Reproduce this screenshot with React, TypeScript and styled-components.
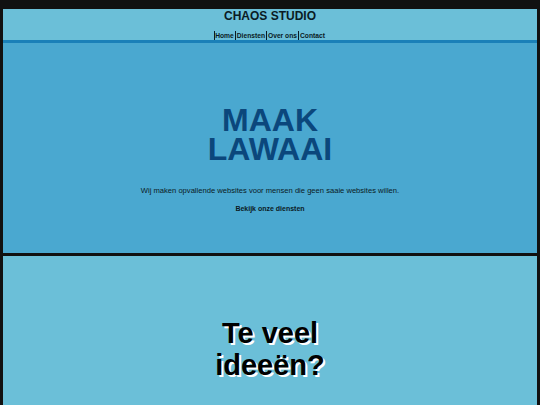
import React from "react";
import styled, { createGlobalStyle } from "styled-components";

const Global = createGlobalStyle`
  html, body { margin: 0; padding: 0; background: #111111; }
  body { font-family: "Liberation Sans", Arial, sans-serif; }
  #root { padding: 9px 3px 0; }
`;

const Page = styled.div`
  display: flex;
  flex-direction: column;
`;

const Header = styled.header`
  background: #6bbfd8;
  border-bottom: 3px solid #1a80b8;
  display: flex;
  flex-direction: column;
  align-items: center;
`;

const Title = styled.div`
  font-size: 12px;
  font-weight: 700;
  line-height: 14px;
  color: #0a1a24;
`;

const Nav = styled.nav`
  display: flex;
  margin-top: 8px;
  height: 9px;
  align-items: center;
`;

const NavLink = styled.a`
  font-size: 6.7px;
  font-weight: 700;
  line-height: 9px;
  color: #0a1a24;
  text-decoration: none;
  border-left: 1px solid #0a1a24;
  padding-left: 0.5px;
  margin-right: 1.5px;
`;

const Hero = styled.section`
  background: #4aa8d0;
  height: 210px;
  display: flex;
  flex-direction: column;
  align-items: center;
  padding-top: 63px;
  box-sizing: border-box;
`;

const BigTitle = styled.h1`
  margin: 0;
  font-size: 32px;
  line-height: 28.8px;
  font-weight: 700;
  color: #0b477c;
  text-align: center;
`;

const Lead = styled.p`
  margin: 22px 0 0;
  font-size: 7.6px;
  line-height: 9px;
  color: #0a1a24;
`;

const Cta = styled.a`
  margin-top: 9px;
  font-size: 7px;
  font-weight: 700;
  line-height: 9px;
  color: #0a1a24;
  text-decoration: none;
`;

const Section = styled.section`
  background: #6bbfd8;
  height: 160px;
  margin-top: 3px;
  display: flex;
  flex-direction: column;
  align-items: center;
  padding-top: 61px;
  box-sizing: border-box;
`;

const ShadowTitle = styled.h2`
  margin: 0;
  font-size: 29px;
  line-height: 32px;
  font-weight: 700;
  color: #000;
  text-align: center;
  text-shadow: 2px 2px 0 #ffffff;
`;

export default function App() {
  return (
    <>
      <Global />
      <Page>
        <Header>
          <Title>CHAOS STUDIO</Title>
          <Nav>
            <NavLink href="#">Home</NavLink>
            <NavLink href="#">Diensten</NavLink>
            <NavLink href="#">Over ons</NavLink>
            <NavLink href="#">Contact</NavLink>
          </Nav>
        </Header>
        <Hero>
          <BigTitle>
            MAAK
            <br />
            LAWAAI
          </BigTitle>
          <Lead>Wij maken opvallende websites voor mensen die geen saaie websites willen.</Lead>
          <Cta href="#">Bekijk onze diensten</Cta>
        </Hero>
        <Section>
          <ShadowTitle>
            Te veel
            <br />
            ideeën?
          </ShadowTitle>
        </Section>
      </Page>
    </>
  );
}
